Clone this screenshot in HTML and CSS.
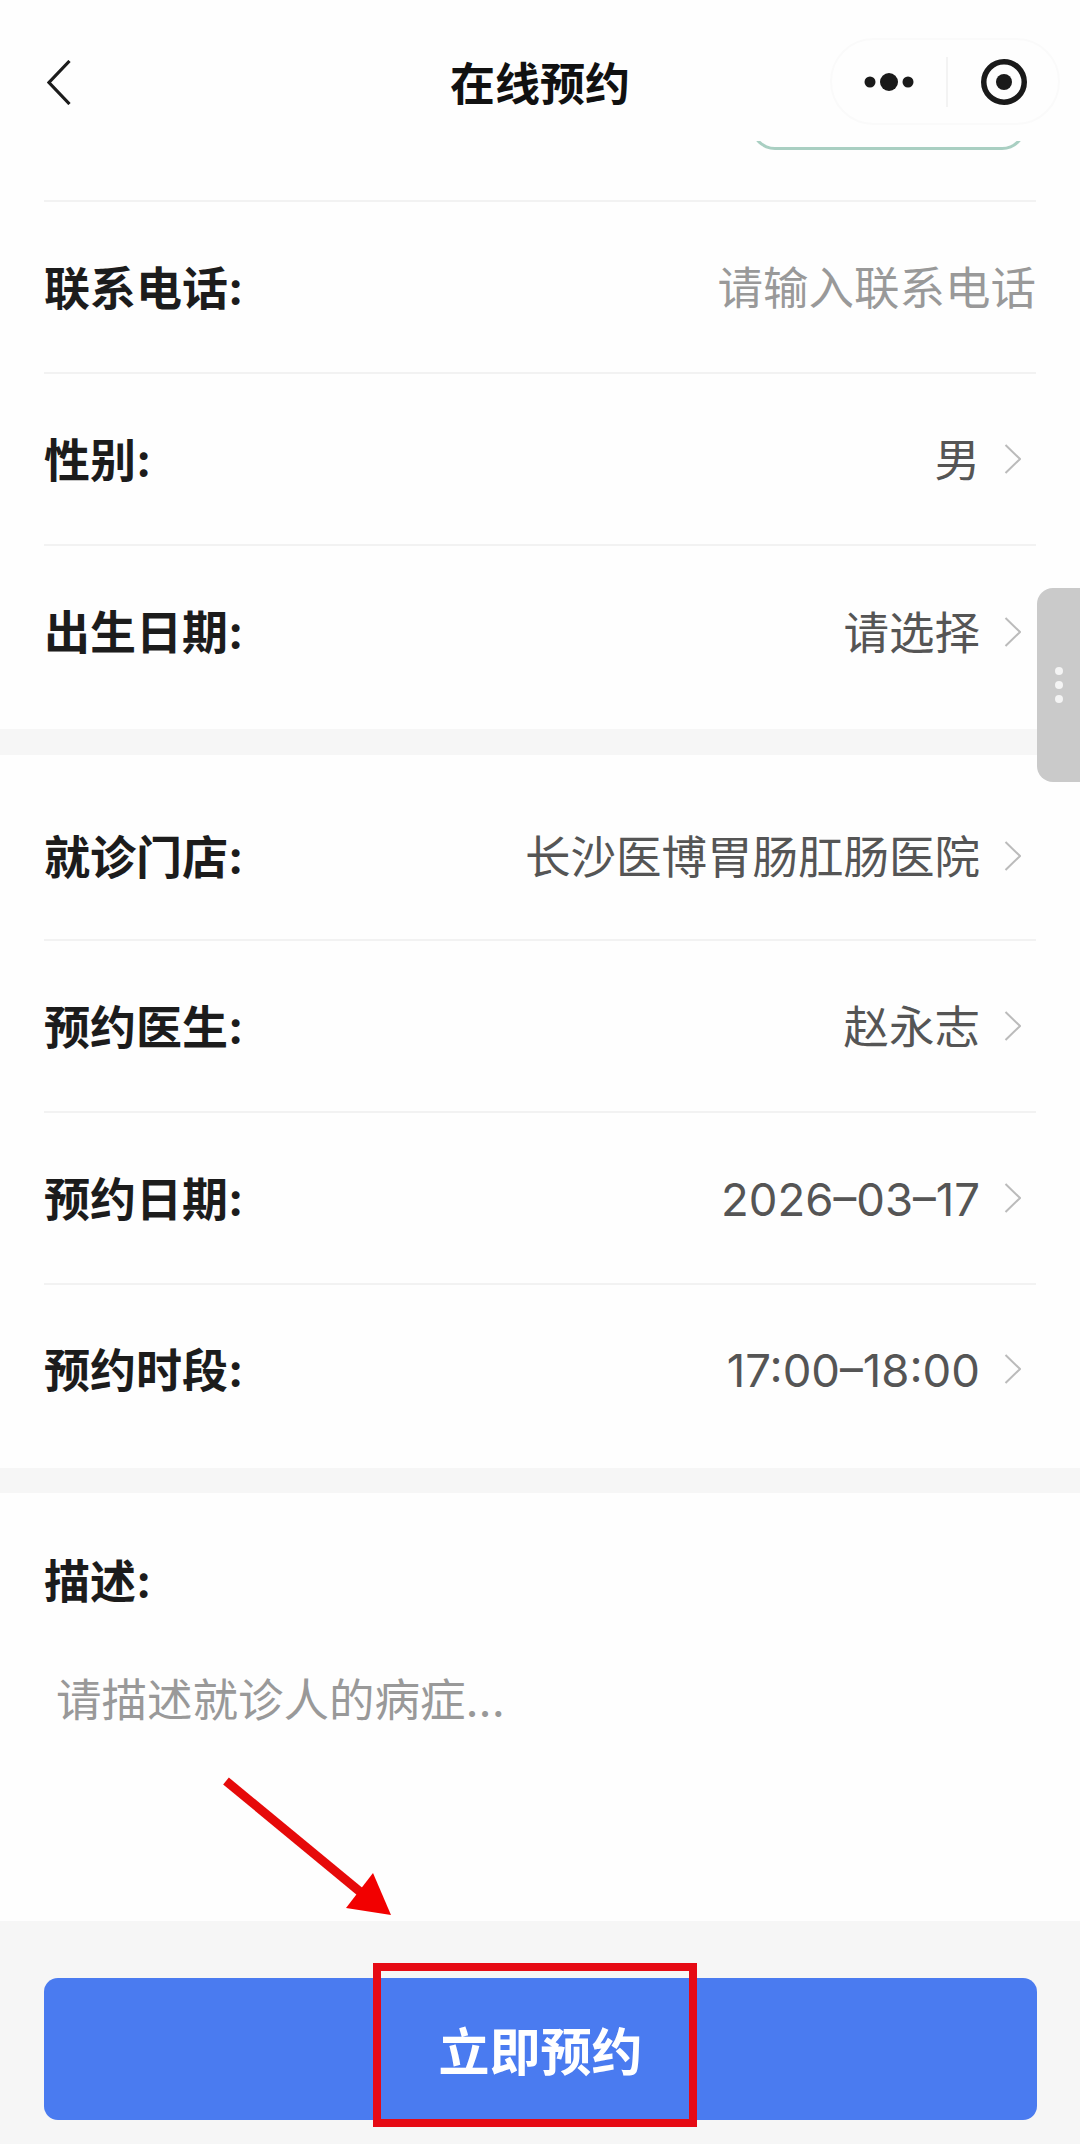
FILE: index.html
```html
<!DOCTYPE html>
<html lang="zh-CN">

<head>
    <meta charset="UTF-8">
    <title>在线预约</title>
    <link rel="stylesheet" href="styles.css">
</head>

<body>
    <div class="page">
        <!-- top bar -->
        <header class="topbar">
            <svg class="back" viewBox="0 0 24 45" width="24" height="45">
                <path d="M22.5 1 L2 22.5 L22.5 44" fill="none" stroke="#1c1c1c" stroke-width="3.2" />
            </svg>
            <h1 class="title">在线预约</h1>
            <div class="capsule">
                <svg class="more" viewBox="0 0 50 18" width="50" height="18">
                    <circle cx="6" cy="9" r="5.5" fill="#1a1a1a" />
                    <circle cx="25" cy="9" r="9" fill="#1a1a1a" />
                    <circle cx="44" cy="9" r="5.5" fill="#1a1a1a" />
                </svg>
                <span class="capsule-line"></span>
                <svg class="target" viewBox="0 0 46 46" width="46" height="46">
                    <circle cx="23" cy="23" r="20.25" fill="none" stroke="#1a1a1a" stroke-width="5.5" />
                    <circle cx="23" cy="23" r="8" fill="#1a1a1a" />
                </svg>
            </div>
        </header>

        <section class="group first">
            <div class="clipped"><div class="arc"></div></div>
            <div class="row">
                <span class="label">联系电话:</span>
                <span class="value placeholder">请输入联系电话</span>
            </div>
            <div class="row">
                <span class="label">性别:</span>
                <span class="value">男</span>
                <svg class="chev" viewBox="0 0 17 30" width="17" height="30"><path d="M1.5 1 L16 15 L1.5 29" /></svg>
            </div>
            <div class="row last">
                <span class="label">出生日期:</span>
                <span class="value">请选择</span>
                <svg class="chev" viewBox="0 0 17 30" width="17" height="30"><path d="M1.5 1 L16 15 L1.5 29" /></svg>
            </div>
        </section>

        <section class="group second">
            <div class="row top">
                <span class="label">就诊门店:</span>
                <span class="value">长沙医博胃肠肛肠医院</span>
                <svg class="chev" viewBox="0 0 17 30" width="17" height="30"><path d="M1.5 1 L16 15 L1.5 29" /></svg>
            </div>
            <div class="row">
                <span class="label">预约医生:</span>
                <span class="value">赵永志</span>
                <svg class="chev" viewBox="0 0 17 30" width="17" height="30"><path d="M1.5 1 L16 15 L1.5 29" /></svg>
            </div>
            <div class="row">
                <span class="label">预约日期:</span>
                <span class="value">2026–03–17</span>
                <svg class="chev" viewBox="0 0 17 30" width="17" height="30"><path d="M1.5 1 L16 15 L1.5 29" /></svg>
            </div>
            <div class="row last tall">
                <span class="label">预约时段:</span>
                <span class="value">17:00–18:00</span>
                <svg class="chev" viewBox="0 0 17 30" width="17" height="30"><path d="M1.5 1 L16 15 L1.5 29" /></svg>
            </div>
        </section>

        <section class="desc">
            <div class="label">描述:</div>
            <div class="desc-text">请描述就诊人的病症...</div>
        </section>

        <footer class="footer">
            <button class="submit">立即预约</button>
        </footer>

        <!-- floating handle -->
        <div class="handle"><i></i><i></i><i></i></div>

        <!-- annotation drawn on top of the screenshot -->
        <svg class="arrow" viewBox="0 0 180 150" width="180" height="150">
            <path d="M4 4 L142 118" stroke="#e60a0a" stroke-width="9" fill="none" />
            <polygon points="169,138 124,131 151,96" fill="#f20000" />
        </svg>
        <div class="redbox"></div>
    </div>
</body>

</html>
```

FILE: styles.css
```css
* {
    box-sizing: border-box;
}

body {
    margin: 0;
    font-family: Inter, "Noto Sans CJK SC", sans-serif;
    background-color: #f6f6f6;
}

.page {
    position: relative;
    width: 1080px;
    height: 2144px;
    overflow: hidden;
    display: flex;
    flex-direction: column;
}

.topbar {
    height: 141px;
    flex: none;
    display: flex;
    align-items: center;
    justify-content: space-between;
    padding: 0 20px 0 47px;
    position: relative;
    background: #fefefe;
}

.back {
    margin-top: 24px;
}

.title {
    position: absolute;
    left: 0;
    right: 0;
    top: 53px;
    margin: 0;
    text-align: center;
    font-size: 45px;
    line-height: 64px;
    font-weight: 700;
    color: #111;
}

.capsule {
    width: 230px;
    height: 87px;
    margin-top: 22px;
    border: 2px solid #fafafa;
    border-radius: 44px;
    display: flex;
    align-items: center;
    padding-left: 32px;
}

.capsule-line {
    width: 2px;
    height: 50px;
    margin: 0 33px 0 32px;
    background: #f3f3f3;
}

.group {
    flex: none;
    background: #fefefe;
    padding: 0 44px;
}

.clipped {
    height: 59px;
    position: relative;
}

.arc {
    position: absolute;
    right: 10px;
    top: -21px;
    width: 275px;
    height: 30px;
    border: 3px solid #a9cfc2;
    border-top: 0;
    border-radius: 0 0 24px 24px;
    clip-path: inset(21px -2px -2px -2px);
}

.row {
    height: 172px;
    border-top: 2px solid #f2f2f2;
    display: flex;
    align-items: center;
}

.row.last {
    height: 185px;
    padding-bottom: 12px;
}

.row.top {
    height: 184px;
    border-top: 0;
    padding-top: 18px;
}

.row.last.tall {
    padding-bottom: 15px;
}

.second {
    margin-top: 26px;
}

.label {
    font-size: 46px;
    line-height: 60px;
    font-weight: 700;
    color: #1c1c1c;
    margin-right: auto;
    padding-top: 1px;
}

.value {
    font-size: 45.5px;
    line-height: 60px;
    color: #555;
    padding-top: 4px;
}

.placeholder {
    color: #999;
}

.chev {
    flex: none;
    margin: 0 15px 0 24px;
}

.chev path {
    fill: none;
    stroke: #bbb;
    stroke-width: 2;
}

.desc {
    flex: none;
    height: 428px;
    margin-top: 25px;
    padding: 57px 44px 0;
    background: #fefefe;
}

.desc-text {
    margin: 60px 0 0 12px;
    font-size: 45.5px;
    line-height: 60px;
    color: #999;
}

.footer {
    flex: 1;
    background: #f6f6f6;
    padding: 57px 44px 0;
}

.submit {
    display: block;
    width: 993px;
    height: 142px;
    border: 0;
    border-radius: 14px;
    background: #4a7bf0;
    color: #fff;
    font-family: inherit;
    font-size: 51px;
    font-weight: 700;
}

.handle {
    position: absolute;
    right: 0;
    top: 588px;
    width: 43px;
    height: 194px;
    border-radius: 16px 0 0 16px;
    background: #cacaca;
    display: flex;
    flex-direction: column;
    align-items: center;
    justify-content: center;
    gap: 6px;
}

.handle i {
    width: 8px;
    height: 8px;
    border-radius: 50%;
    background: #f4f4f4;
}

.arrow {
    position: absolute;
    left: 222px;
    top: 1777px;
}

.redbox {
    position: absolute;
    left: 373px;
    top: 1963px;
    width: 324px;
    height: 164px;
    border: 8px solid #e60a14;
}
```
